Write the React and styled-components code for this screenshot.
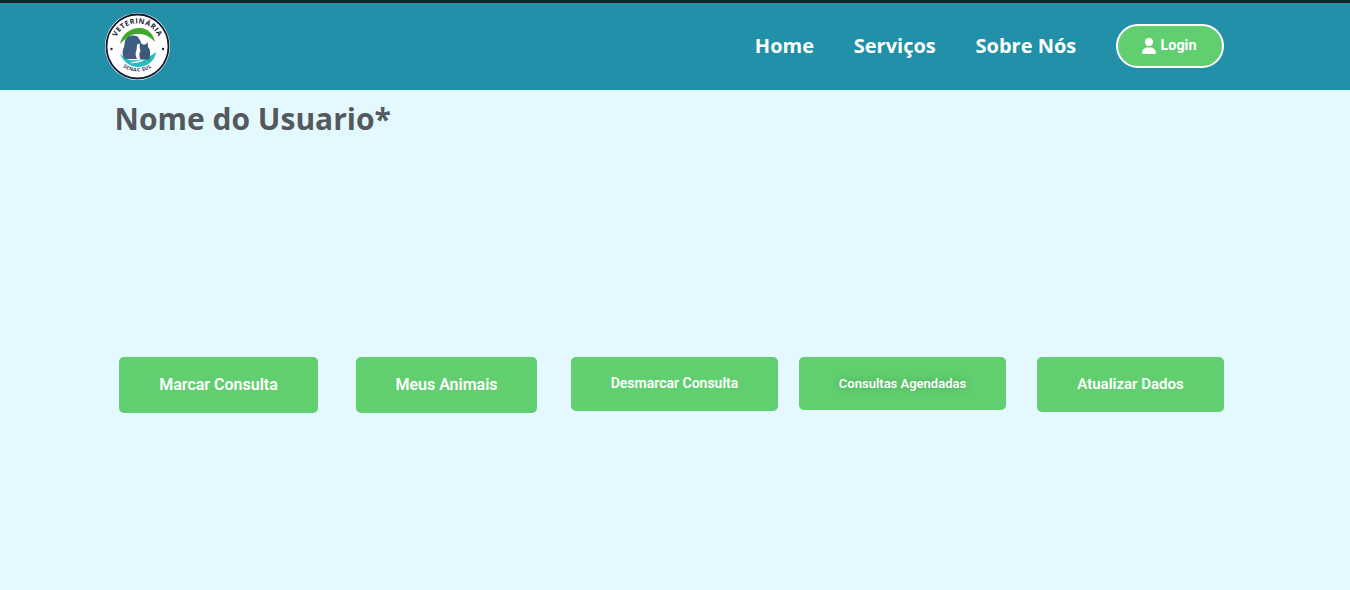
import React from "react";
import styled, { createGlobalStyle } from "styled-components";

const GlobalStyle = createGlobalStyle`
  html, body {
    margin: 0;
    padding: 0;
    height: 100%;
    background: #e4f9fe;
    font-family: "Open Sans", sans-serif;
  }
`;

const Page = styled.div`
  height: 590px;
  overflow: hidden;
  background: #e4f9fe;
`;

const Header = styled.header`
  height: 87px;
  border-top: 3px solid #18242c;
  background: #2190a8;
  display: flex;
  align-items: center;
  padding: 0 126px 0 105px;
`;

const LogoWrap = styled.a`
  display: flex;
  width: 65px;
  height: 67px;
  margin-top: -1px;
`;

const Nav = styled.nav`
  margin-left: auto;
  margin-top: -2px;
  display: flex;
  align-items: center;
`;

const NavLink = styled.a`
  color: #fff;
  font-size: 20px;
  font-weight: 700;
  margin-right: 39.75px;
  cursor: pointer;
`;

const LoginButton = styled.button`
  width: 108px;
  height: 44px;
  box-sizing: border-box;
  border: 2px solid #fff;
  border-radius: 22px;
  background: #61ce70;
  color: #fff;
  font-family: "Roboto", sans-serif;
  font-size: 14.4px;
  font-weight: 700;
  display: flex;
  align-items: center;
  justify-content: center;
  gap: 4px;
  padding: 0 1px 0 0;
  cursor: pointer;
`;

const Main = styled.main`
  padding: 0 126px 0 114.5px;
`;

const UserName = styled.h1`
  margin: 8px 0 0;
  color: #54595f;
  font-size: 30px;
  font-weight: 700;
  line-height: 41px;
`;

const Actions = styled.div`
  display: flex;
  align-items: flex-start;
  margin-top: 218px;
  padding-left: 4.5px;
`;

const ActionButton = styled.button`
  width: ${(p) => p.$width}px;
  height: ${(p) => p.$height}px;
  margin-left: ${(p) => p.$gap || 0}px;
  flex: none;
  border: none;
  border-radius: 5px;
  background: #61ce70;
  color: #fff;
  font-family: "Roboto", sans-serif;
  font-size: ${(p) => p.$size}px;
  font-weight: 600;
  padding: 0 0 ${(p) => p.$lift || 0}px;
  text-shadow: ${(p) => (p.$shadow ? "0 0 6px rgba(60, 110, 70, 0.45)" : "none")};
  cursor: pointer;
`;

const actions = [
  { label: "Marcar Consulta", width: 199, height: 56, size: 16, lift: 2 },
  { label: "Meus Animais", width: 181, height: 56, size: 16, gap: 38, lift: 2 },
  { label: "Desmarcar Consulta", width: 207, height: 54, size: 14, gap: 34, lift: 2 },
  { label: "Consultas Agendadas", width: 207, height: 53, size: 13, gap: 21, shadow: true },
  { label: "Atualizar Dados", width: 187, height: 55, size: 15, gap: 31, lift: 2 },
];

function Logo() {
  return (
    <svg viewBox="0 0 65 67" width="65" height="67">
      <defs>
        <path id="arcTop" d="M9.500 33.500a23 23 0 0 1 46 0" />
        <path id="arcBottom" d="M9.800 44a25 25 0 0 0 45.400 0" />
      </defs>
      <ellipse cx="32.500" cy="33.500" rx="32.500" ry="33.500" fill="#fff" />
      <ellipse cx="32.500" cy="33.500" rx="31" ry="32" fill="none" stroke="#14192f" strokeWidth="1.800" />
      <text fontFamily="Open Sans" fontSize="7.200" fontWeight="700" fill="#1c2438" letterSpacing="0.500">
        <textPath href="#arcTop" startOffset="50%" textAnchor="middle">VETERINÁRIA</textPath>
      </text>
      <text fontFamily="Open Sans" fontSize="5" fontWeight="700" fill="#2a3248" letterSpacing="0.400">
        <textPath href="#arcBottom" startOffset="50%" textAnchor="middle">SENAC SUL</textPath>
      </text>
      <circle cx="6.500" cy="36" r="1.200" fill="#1c2438" />
      <circle cx="58" cy="36" r="1.200" fill="#1c2438" />
      <path d="M15 31c2-10 10-16 20-16 7 0 13 5 15 14-4-4-9-8-15-8-5 0-7 0-10 2-4 2-7 5-10 8z" fill="#3fa82c" />
      <path d="M15 40c4 6 10 8 16 7 7 0 14-3 20-8-1 9-9 15-18 15-8 0-16-6-18-14z" fill="#27bcc0" />
      <path d="M25 50c5-2 12-3 18-6-4 4-11 7-18 6z" fill="#e8fbfb" />
      <path
        d="M24 23.500c3-1.500 7-1 9 .5l3 5c-.5 1.500-2 2-3.500 2-1 2-.5 4-1 6-1.500 3-1 6 .5 9H20c-3-3-3-8-1-12l1-6c.5-2 2-3.500 4-4.500z"
        fill="#3f5d80"
      />
      <path
        d="M35.500 29.500l2 2h3l2-2.500.5 5c2 2 2.500 5 2 8l-.5 4.500h-9c-1.500-3-1.500-6 0-9-1-2-1-5-.5-8z"
        fill="#3a5878"
      />
    </svg>
  );
}

function UserIcon() {
  return (
    <svg viewBox="0 0 448 512" width="14" height="16" fill="#fff">
      <path d="M224 256a128 128 0 1 0 0-256 128 128 0 1 0 0 256zm-45.700 48C79.800 304 0 383.800 0 482.300 0 498.700 13.300 512 29.700 512h388.600c16.400 0 29.700-13.300 29.700-29.700C448 383.800 368.200 304 269.700 304h-91.400z" />
    </svg>
  );
}

export default function App() {
  return (
    <Page>
      <GlobalStyle />
      <Header>
        <LogoWrap>
          <Logo />
        </LogoWrap>
        <Nav>
          <NavLink>Home</NavLink>
          <NavLink>Serviços</NavLink>
          <NavLink>Sobre Nós</NavLink>
          <LoginButton>
            <UserIcon />
            Login
          </LoginButton>
        </Nav>
      </Header>
      <Main>
        <UserName>Nome do Usuario*</UserName>
        <Actions>
          {actions.map((a) => (
            <ActionButton
              key={a.label}
              $width={a.width}
              $height={a.height}
              $size={a.size}
              $gap={a.gap}
              $lift={a.lift}
              $shadow={a.shadow}
            >
              {a.label}
            </ActionButton>
          ))}
        </Actions>
      </Main>
    </Page>
  );
}
